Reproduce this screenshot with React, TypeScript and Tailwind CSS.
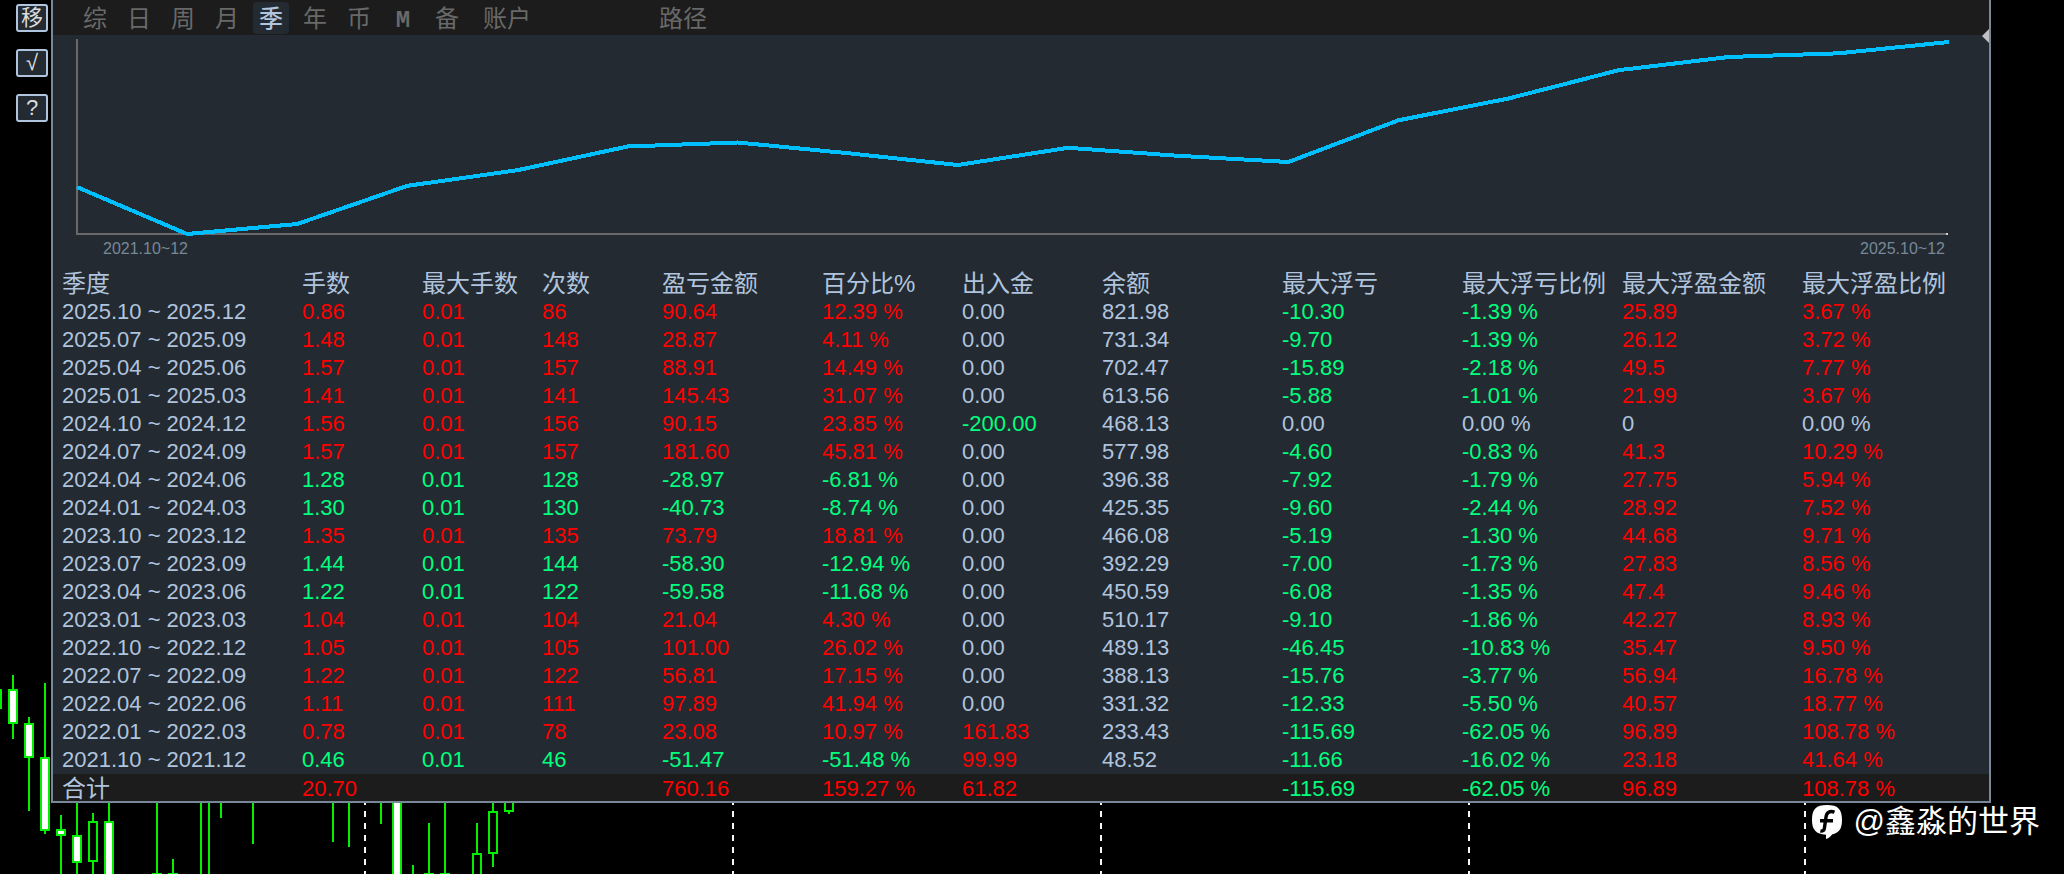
type Quarter = string[];

const HEADERS = [
  "季度", "手数", "最大手数", "次数", "盈亏金额", "百分比%", "出入金", "余额",
  "最大浮亏", "最大浮亏比例", "最大浮盈金额", "最大浮盈比例",
];

const COLUMN_WIDTHS = [
  "w-[240px]", "w-[120px]", "w-[120px]", "w-[120px]", "w-[160px]", "w-[140px]",
  "w-[140px]", "w-[180px]", "w-[180px]", "w-[160px]", "w-[180px]", "w-[196px]",
];

const ROWS: Quarter[] = [
  ["2025.10 ~ 2025.12", "0.86", "0.01", "86", "90.64", "12.39 %", "0.00", "821.98", "-10.30", "-1.39 %", "25.89", "3.67 %"],
  ["2025.07 ~ 2025.09", "1.48", "0.01", "148", "28.87", "4.11 %", "0.00", "731.34", "-9.70", "-1.39 %", "26.12", "3.72 %"],
  ["2025.04 ~ 2025.06", "1.57", "0.01", "157", "88.91", "14.49 %", "0.00", "702.47", "-15.89", "-2.18 %", "49.5", "7.77 %"],
  ["2025.01 ~ 2025.03", "1.41", "0.01", "141", "145.43", "31.07 %", "0.00", "613.56", "-5.88", "-1.01 %", "21.99", "3.67 %"],
  ["2024.10 ~ 2024.12", "1.56", "0.01", "156", "90.15", "23.85 %", "-200.00", "468.13", "0.00", "0.00 %", "0", "0.00 %"],
  ["2024.07 ~ 2024.09", "1.57", "0.01", "157", "181.60", "45.81 %", "0.00", "577.98", "-4.60", "-0.83 %", "41.3", "10.29 %"],
  ["2024.04 ~ 2024.06", "1.28", "0.01", "128", "-28.97", "-6.81 %", "0.00", "396.38", "-7.92", "-1.79 %", "27.75", "5.94 %"],
  ["2024.01 ~ 2024.03", "1.30", "0.01", "130", "-40.73", "-8.74 %", "0.00", "425.35", "-9.60", "-2.44 %", "28.92", "7.52 %"],
  ["2023.10 ~ 2023.12", "1.35", "0.01", "135", "73.79", "18.81 %", "0.00", "466.08", "-5.19", "-1.30 %", "44.68", "9.71 %"],
  ["2023.07 ~ 2023.09", "1.44", "0.01", "144", "-58.30", "-12.94 %", "0.00", "392.29", "-7.00", "-1.73 %", "27.83", "8.56 %"],
  ["2023.04 ~ 2023.06", "1.22", "0.01", "122", "-59.58", "-11.68 %", "0.00", "450.59", "-6.08", "-1.35 %", "47.4", "9.46 %"],
  ["2023.01 ~ 2023.03", "1.04", "0.01", "104", "21.04", "4.30 %", "0.00", "510.17", "-9.10", "-1.86 %", "42.27", "8.93 %"],
  ["2022.10 ~ 2022.12", "1.05", "0.01", "105", "101.00", "26.02 %", "0.00", "489.13", "-46.45", "-10.83 %", "35.47", "9.50 %"],
  ["2022.07 ~ 2022.09", "1.22", "0.01", "122", "56.81", "17.15 %", "0.00", "388.13", "-15.76", "-3.77 %", "56.94", "16.78 %"],
  ["2022.04 ~ 2022.06", "1.11", "0.01", "111", "97.89", "41.94 %", "0.00", "331.32", "-12.33", "-5.50 %", "40.57", "18.77 %"],
  ["2022.01 ~ 2022.03", "0.78", "0.01", "78", "23.08", "10.97 %", "161.83", "233.43", "-115.69", "-62.05 %", "96.89", "108.78 %"],
  ["2021.10 ~ 2021.12", "0.46", "0.01", "46", "-51.47", "-51.48 %", "99.99", "48.52", "-11.66", "-16.02 %", "23.18", "41.64 %"],
];

const TOTAL: Quarter = ["合计", "20.70", "", "", "760.16", "159.27 %", "61.82", "", "-115.69", "-62.05 %", "96.89", "108.78 %"];

const NEUTRAL = "text-[#b0c4de]";
const GAIN = "text-[#ff0000]";
const LOSS = "text-[#00ff7f]";

/** Lots and trade counts take the colour of the quarter's result; other columns follow their own sign. */
function cellColor(row: Quarter, column: number): string {
  if (column === 0 || column === 7) return NEUTRAL;
  const value = parseFloat(column <= 3 ? row[4] : row[column]);
  if (value > 0) return GAIN;
  if (value < 0) return LOSS;
  return NEUTRAL;
}

const TABS = ["综", "日", "周", "月", "季", "年", "币", "M", "备"];

function Toolbar() {
  return (
    <nav className="flex h-[35px] items-center bg-[#1c1c1c] pl-6 text-[24px] leading-[34px] text-[#696969]">
      <div className="flex gap-2">
        {TABS.map((tab) => (
          <button
            key={tab}
            type="button"
            className={
              tab === "季"
                ? "h-8 w-9 rounded-sm bg-[#232a31] text-center font-medium text-[#b0c4de]"
                : tab === "M"
                  ? "h-8 w-9 pt-[2px] text-center font-['Liberation_Mono',monospace] font-bold"
                  : "h-8 w-9 text-center"
            }
          >
            {tab}
          </button>
        ))}
        <button type="button" className="h-8 w-[68px] text-center">账户</button>
      </div>
      <button type="button" className="ml-[108px] h-8 w-[68px] text-center">路径</button>
    </nav>
  );
}

const CHART_W = 1936;
const CHART_H = 202;

function growthPoints(): string {
  const totals = [0];
  for (const row of [...ROWS].reverse()) {
    totals.push(totals[totals.length - 1] + parseFloat(row[5]));
  }
  const min = Math.min(...totals);
  const max = Math.max(...totals);
  return totals
    .map((total, i) => {
      const x = 24 + (i * 1872) / (totals.length - 1);
      const y = 199 - ((total - min) / (max - min)) * 192;
      return `${x.toFixed(1)},${y.toFixed(1)}`;
    })
    .join(" ");
}

function GrowthChart() {
  return (
    <section>
      <svg
        viewBox={`0 0 ${CHART_W} ${CHART_H}`}
        preserveAspectRatio="none"
        className="block h-[202px] w-full"
        role="img"
        aria-label="百分比%"
      >
        <g shapeRendering="crispEdges">
          <rect x="23" y="4" width="2" height="196" fill="#696969" />
          <rect x="23" y="198" width="1871" height="2" fill="#696969" />
          <rect x="1893" y="198" width="2" height="2" fill="#d3d3d3" />
          <polyline points={growthPoints()} fill="none" stroke="#00bfff" strokeWidth="4" />
        </g>
      </svg>
      <div className="flex h-[30px] justify-between pr-[44px] pl-[50px] text-[16px] leading-6 text-[#778899]">
        <span>2021.10~12</span>
        <span>2025.10~12</span>
      </div>
    </section>
  );
}

function QuarterTable() {
  return (
    <table className="w-full table-fixed border-collapse text-left text-[22px] leading-[28px] whitespace-nowrap">
      <colgroup>
        {COLUMN_WIDTHS.map((width, i) => (
          <col key={i} className={width} />
        ))}
      </colgroup>
      <thead>
        <tr className="h-[31px]">
          {HEADERS.map((header) => (
            <th key={header} scope="col" className="p-0 pt-[3px] pl-[9px] text-[24px] font-normal text-[#b0c4de]">
              {header}
            </th>
          ))}
        </tr>
      </thead>
      <tbody>
        {ROWS.map((row) => (
          <tr key={row[0]} className="h-[28px]">
            {row.map((cell, i) => (
              <td key={i} className={`p-0 pl-[9px] ${cellColor(row, i)}`}>
                {cell}
              </td>
            ))}
          </tr>
        ))}
      </tbody>
      <tfoot>
        <tr className="h-[27px] bg-[#1c1c1c] leading-[24px]">
          {TOTAL.map((cell, i) => (
            <td key={i} className={`p-0 pt-[3px] pl-[9px] ${i === 0 ? "text-[24px]" : ""} ${cellColor(TOTAL, i)}`}>
              {cell}
            </td>
          ))}
        </tr>
      </tfoot>
    </table>
  );
}

/** [centre x, wick top, wick bottom, body top, body bottom, filled] */
type Candle = [number, number, number, number, number, boolean];

const CANDLES: Candle[] = [
  [-3, 689, 709, 689, 709, false],
  [13, 675, 739, 689, 724, true],
  [29, 717, 811, 723, 758, true],
  [45, 683, 834, 757, 831, true],
  [61, 815, 874, 829, 836, true],
  [77, 790, 874, 835, 863, true],
  [93, 813, 874, 821, 862, false],
  [109, 790, 874, 821, 880, true],
  [157, 790, 874, 873, 880, false],
  [173, 859, 874, 873, 880, false],
  [205, 790, 790, 790, 880, false],
  [397, 790, 790, 790, 880, true],
  [429, 823, 874, 873, 880, false],
  [445, 790, 874, 873, 880, false],
  [477, 823, 853, 853, 880, false],
  [493, 790, 867, 811, 854, false],
  [509, 790, 814, 790, 812, false],
];

/** [x, top, bottom] */
const WICKS = [
  [221, 790, 818],
  [253, 790, 844],
  [333, 790, 842],
  [349, 790, 847],
  [381, 790, 824],
  [413, 865, 874],
];

const SEPARATORS = [365, 733, 1101, 1469, 1805];

function PriceBackdrop() {
  return (
    <svg className="absolute top-0 left-0 h-[874px] w-full" aria-hidden="true" shapeRendering="crispEdges">
      {SEPARATORS.map((x) => (
        <line key={x} x1={x} x2={x} y1="799" y2="874" stroke="#f5f5f5" strokeWidth="2" strokeDasharray="6 6" />
      ))}
      {WICKS.map(([x, top, bottom]) => (
        <rect key={x} x={x - 1} y={top} width="2" height={bottom - top} fill="#00f000" />
      ))}
      {CANDLES.map(([x, top, bottom, bodyTop, bodyBottom, filled]) => (
        <g key={x}>
          <rect x={x - 1} y={top} width="2" height={bottom - top} fill="#00f000" />
          <rect
            x={x - 4}
            y={bodyTop + 1}
            width="8"
            height={bodyBottom - bodyTop - 2}
            fill={filled ? "#ffffff" : "#000000"}
            stroke="#00f000"
            strokeWidth="2"
          />
        </g>
      ))}
    </svg>
  );
}

function Watermark() {
  return (
    <div className="absolute right-6 bottom-[30px] flex items-center gap-3 text-[31px] leading-[44px] text-white">
      <svg viewBox="0 0 30 34" className="h-[34px] w-[30px]" aria-hidden="true">
        <path
          d="M15 0C4 0 0 4 0 15c0 10 4 14 14 14.800L14 34c3-1 5-3 6-4.600C27 28 30 24 30 15 30 4 26 0 15 0Z"
          fill="#ffffff"
        />
        <path
          d="M22.500 7.200c-4.800-1.700-7.900 0-8.500 4.800l-1.600 11.200c-.3 2.400-1.800 3.200-4 2.700M8 15.800h13"
          fill="none"
          stroke="#000000"
          strokeWidth="3.400"
        />
      </svg>
      <span>@鑫淼的世界</span>
    </div>
  );
}

export default function App() {
  return (
    <main className="relative flex min-h-screen items-start overflow-hidden bg-black font-['Liberation_Sans','Noto_Sans_CJK_SC',sans-serif]">
      <PriceBackdrop />
      <aside className="relative flex w-[51px] shrink-0 flex-col gap-[17px] pt-1 pl-4">
        {["移", "√", "?"].map((label) => (
          <button
            key={label}
            type="button"
            className="flex h-7 w-8 items-center justify-center rounded-[3px] border-2 border-[#b0c4de] bg-[#232a31] text-[22px] leading-6 text-[#dcdcdc]"
          >
            {label}
          </button>
        ))}
      </aside>
      <div className="relative mr-[73px] min-w-0 flex-1 border-2 border-t-0 border-[#778899] bg-[#232a31]">
        <Toolbar />
        <GrowthChart />
        <QuarterTable />
        <svg viewBox="0 0 7 14" className="absolute top-[29px] right-0 h-[14px] w-[7px]" aria-hidden="true">
          <path d="M7 0v14L0 7Z" fill="#c0c0c0" />
        </svg>
      </div>
      <Watermark />
    </main>
  );
}
